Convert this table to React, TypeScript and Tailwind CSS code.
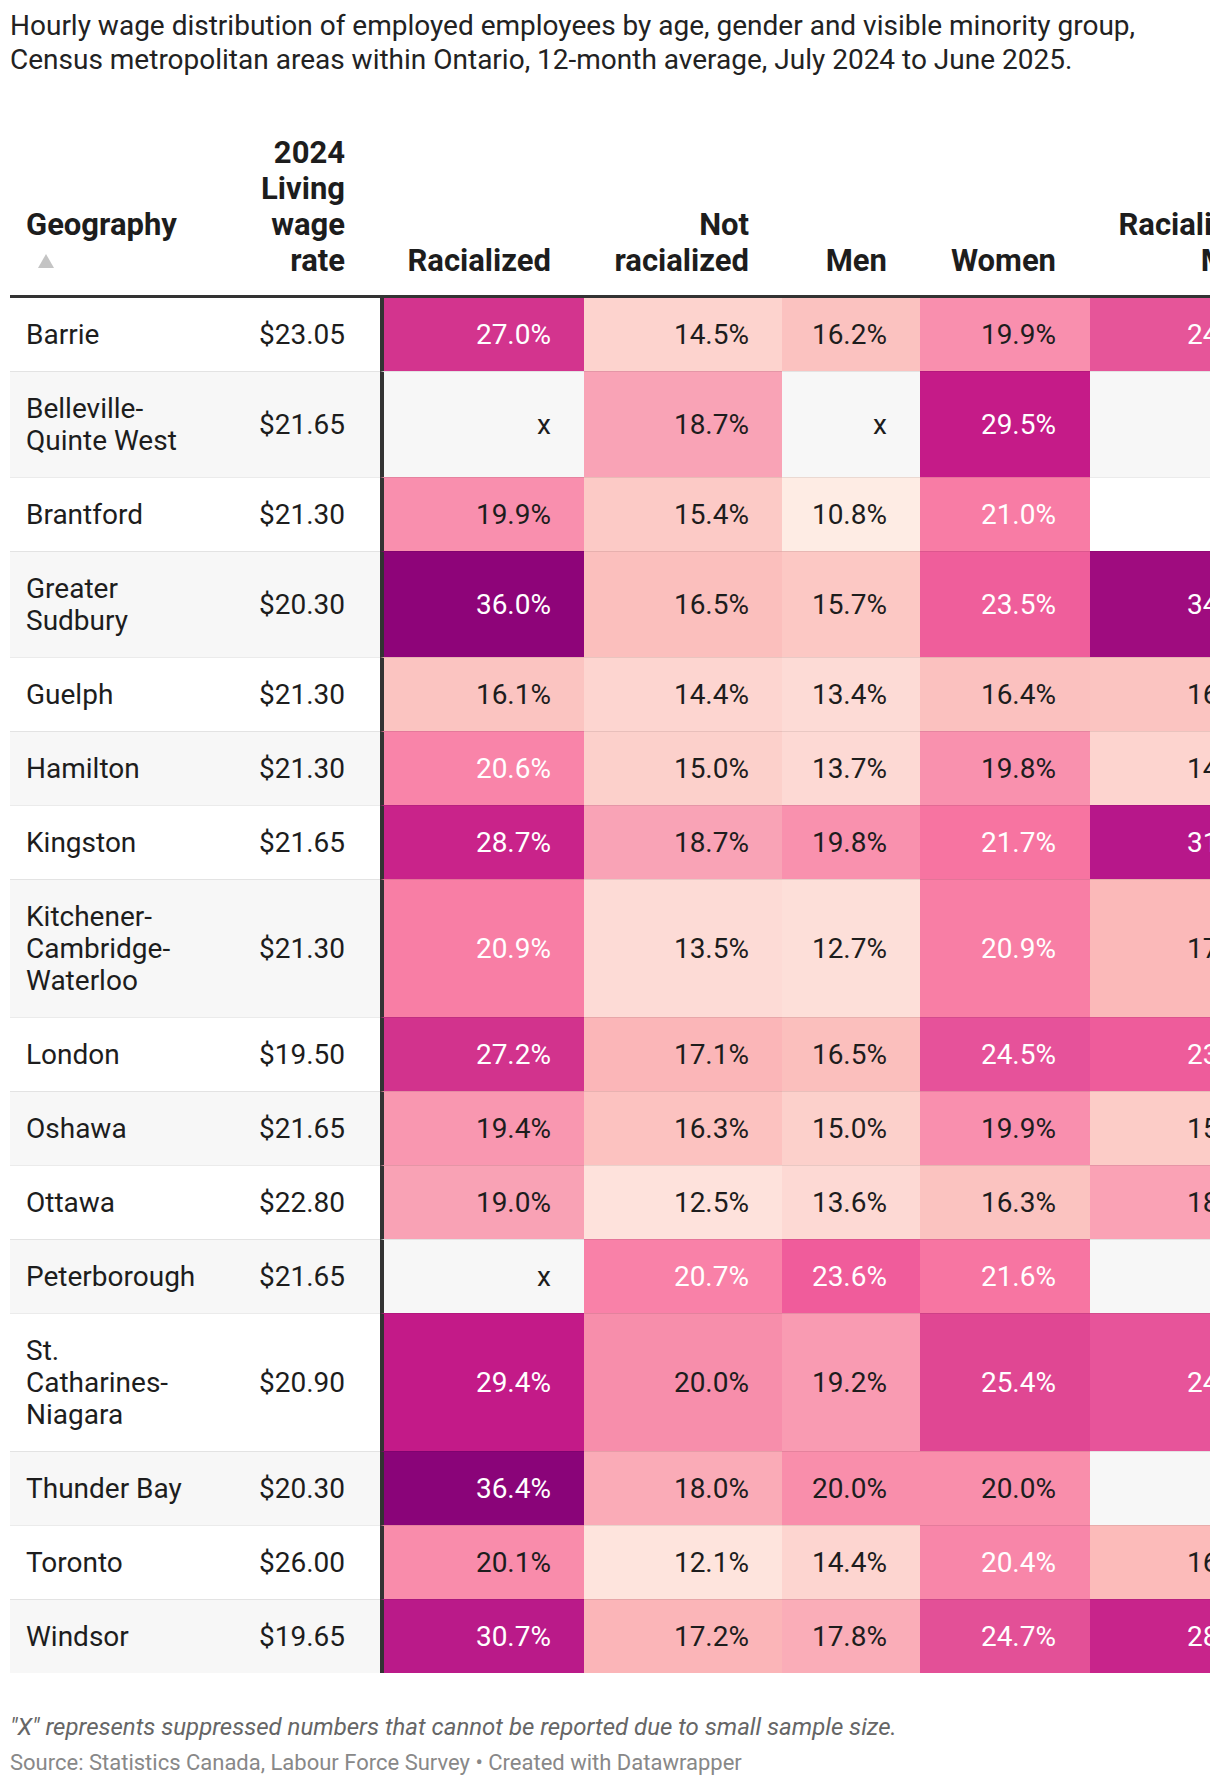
type Cell = [string, string];

type Row = {
  geo: string;
  wage: string;
  cells: Cell[];
};

const rows: Row[] = [
  { geo: "Barrie", wage: "$23.05", cells: [["27.0%", "#d3348e"], ["14.5%", "#fdd3ce"], ["16.2%", "#fbc2c0"], ["19.9%", "#f98fae"], ["24.6%", "#e65599"]] },
  { geo: "Belleville-Quinte West", wage: "$21.65", cells: [["x", ""], ["18.7%", "#f9a3b6"], ["x", ""], ["29.5%", "#c51b88"], ["x", ""]] },
  { geo: "Brantford", wage: "$21.30", cells: [["19.9%", "#f98fae"], ["15.4%", "#fccac6"], ["10.8%", "#feece4"], ["21.0%", "#f87ca5"], ["x", ""]] },
  { geo: "Greater Sudbury", wage: "$20.30", cells: [["36.0%", "#8e0479"], ["16.5%", "#fbbfbd"], ["15.7%", "#fcc8c4"], ["23.5%", "#ef5e9b"], ["34.2%", "#9f0c7f"]] },
  { geo: "Guelph", wage: "$21.30", cells: [["16.1%", "#fbc4c1"], ["14.4%", "#fdd5d0"], ["13.4%", "#fddbd6"], ["16.4%", "#fbc1bf"], ["16.1%", "#fbc4c1"]] },
  { geo: "Hamilton", wage: "$21.30", cells: [["20.6%", "#f984a9"], ["15.0%", "#fcd0cb"], ["13.7%", "#fdd9d4"], ["19.8%", "#f991ae"], ["14.6%", "#fdd4cf"]] },
  { geo: "Kingston", wage: "$21.65", cells: [["28.7%", "#c9238a"], ["18.7%", "#f9a3b6"], ["19.8%", "#f991ae"], ["21.7%", "#f774a1"], ["31.4%", "#b7178a"]] },
  { geo: "Kitchener-Cambridge-Waterloo", wage: "$21.30", cells: [["20.9%", "#f87ea5"], ["13.5%", "#fddbd6"], ["12.7%", "#fddfd9"], ["20.9%", "#f87ea5"], ["17.3%", "#fbb9b9"]] },
  { geo: "London", wage: "$19.50", cells: [["27.2%", "#d2338d"], ["17.1%", "#fbb6b8"], ["16.5%", "#fbbfbd"], ["24.5%", "#e6529a"], ["23.8%", "#ee5c9b"]] },
  { geo: "Oshawa", wage: "$21.65", cells: [["19.4%", "#f997b0"], ["16.3%", "#fcc2c0"], ["15.0%", "#fcd0cb"], ["19.9%", "#f98fae"], ["15.2%", "#fcccc7"]] },
  { geo: "Ottawa", wage: "$22.80", cells: [["19.0%", "#f9a2b5"], ["12.5%", "#fee2dc"], ["13.6%", "#fdd9d4"], ["16.3%", "#fbc3c0"], ["18.6%", "#faa2b5"]] },
  { geo: "Peterborough", wage: "$21.65", cells: [["x", ""], ["20.7%", "#f981a8"], ["23.6%", "#f05c9b"], ["21.6%", "#f775a2"], ["x", ""]] },
  { geo: "St. Catharines-Niagara", wage: "$20.90", cells: [["29.4%", "#c31a88"], ["20.0%", "#f78eab"], ["19.2%", "#f99bb2"], ["25.4%", "#e04793"], ["24.5%", "#e7549a"]] },
  { geo: "Thunder Bay", wage: "$20.30", cells: [["36.4%", "#8a0479"], ["18.0%", "#faabb7"], ["20.0%", "#f98eab"], ["20.0%", "#f98eab"], ["x", ""]] },
  { geo: "Toronto", wage: "$26.00", cells: [["20.1%", "#f98cab"], ["12.1%", "#fee4dd"], ["14.4%", "#fdd5d0"], ["20.4%", "#f886a9"], ["16.8%", "#fcbbba"]] },
  { geo: "Windsor", wage: "$19.65", cells: [["30.7%", "#ba1a89"], ["17.2%", "#fbb5b8"], ["17.8%", "#faadb8"], ["24.7%", "#e35097"], ["28.4%", "#c8248b"]] },
];

const headers = ["Racialized", "Not racialized", "Men", "Women", "Racialized Men"];
const colWidths = ["w-[204px]", "w-[198px]", "w-[138px]", "w-[170px]", "w-[207px]"];
const padRight = ["pr-[33px]", "pr-[33px]", "pr-[33px]", "pr-[34px]", "pr-[35px]"];

function isLight(v: string) {
  const n = parseFloat(v);
  return !isNaN(n) && n >= 20.3;
}

export default function App() {
  return (
    <div className="bg-white font-['Roboto',sans-serif] text-[#1d1d1d] w-[1220px]">
      <h1 className="pt-[9px] pl-[10px] text-[28px] leading-[34px] font-normal text-[#222]">
        Hourly wage distribution of employed employees by age, gender and visible minority group,
        <br />
        Census metropolitan areas within Ontario, 12-month average, July 2024 to June 2025.
      </h1>

      <div className="ml-[10px] mt-[58px] w-[1200px] overflow-hidden">
        <table className="table-fixed border-separate border-spacing-0 w-[1287px]">
          <colgroup>
            <col className="w-[200px]" />
            <col className="w-[170px]" />
            {colWidths.map((w, i) => (
              <col key={i} className={w} />
            ))}
          </colgroup>
          <thead>
            <tr>
              <th className="border-b-[3px] border-[#333] pl-[16px] pr-[9px] pb-[16px] text-left align-bottom text-[31px] leading-[36px] font-bold">
                <div>Geography</div>
                <div className="h-[36px] flex items-center pl-[12px]">
                  <svg width="16" height="14" viewBox="0 0 16 14">
                    <polygon points="8,0 16,14 0,14" fill="#c4c4c4" />
                  </svg>
                </div>
              </th>
              <th className="border-b-[3px] border-[#333] pl-[24px] pr-[35px] pb-[16px] text-right align-bottom text-[31px] leading-[36px] font-bold">
                2024 Living wage rate
              </th>
              {headers.map((h, i) => (
                <th
                  key={h}
                  className={`border-b-[3px] border-[#333] ${padRight[i]} pb-[16px] text-right align-bottom text-[31px] leading-[36px] font-bold`}
                >
                  {h}
                </th>
              ))}
            </tr>
          </thead>
          <tbody>
            {rows.map((r, i) => {
              const rowBg = i % 2 === 1 ? "bg-[#f7f7f7]" : "bg-white";
              const line = i > 0 ? "border-t border-t-black/[0.08]" : "";
              return (
                <tr key={r.geo}>
                  <td className={`${rowBg} ${line} pl-[16px] pr-[9px] pt-[21px] pb-[20px] align-middle text-[28px] leading-[32px]`}>
                    {r.geo}
                  </td>
                  <td className={`${rowBg} ${line} pl-[24px] pr-[35px] pt-[21px] pb-[20px] text-right align-middle text-[28px] leading-[32px]`}>
                    {r.wage}
                  </td>
                  {r.cells.map(([v, c], j) => (
                    <td
                      key={j}
                      style={c ? { backgroundColor: c } : undefined}
                      className={`${rowBg} ${line} ${padRight[j]} pt-[21px] pb-[20px] text-right align-middle text-[28px] leading-[32px] ${
                        j === 0 ? "border-l-4 border-l-[#333]" : ""
                      } ${isLight(v) ? "text-white" : "text-[#1d1d1d]"}`}
                    >
                      {v}
                    </td>
                  ))}
                </tr>
              );
            })}
          </tbody>
        </table>
      </div>

      <div className="pl-[10px] pt-[40px] pb-[10px]">
        <p className="italic text-[24px] leading-[28px] text-[#666]">
          "X" represents suppressed numbers that cannot be reported due to small sample size.
        </p>
        <p className="mt-[8px] text-[22px] leading-[28px] text-[#888]">
          Source: Statistics Canada, Labour Force Survey • Created with Datawrapper
        </p>
      </div>
    </div>
  );
}
